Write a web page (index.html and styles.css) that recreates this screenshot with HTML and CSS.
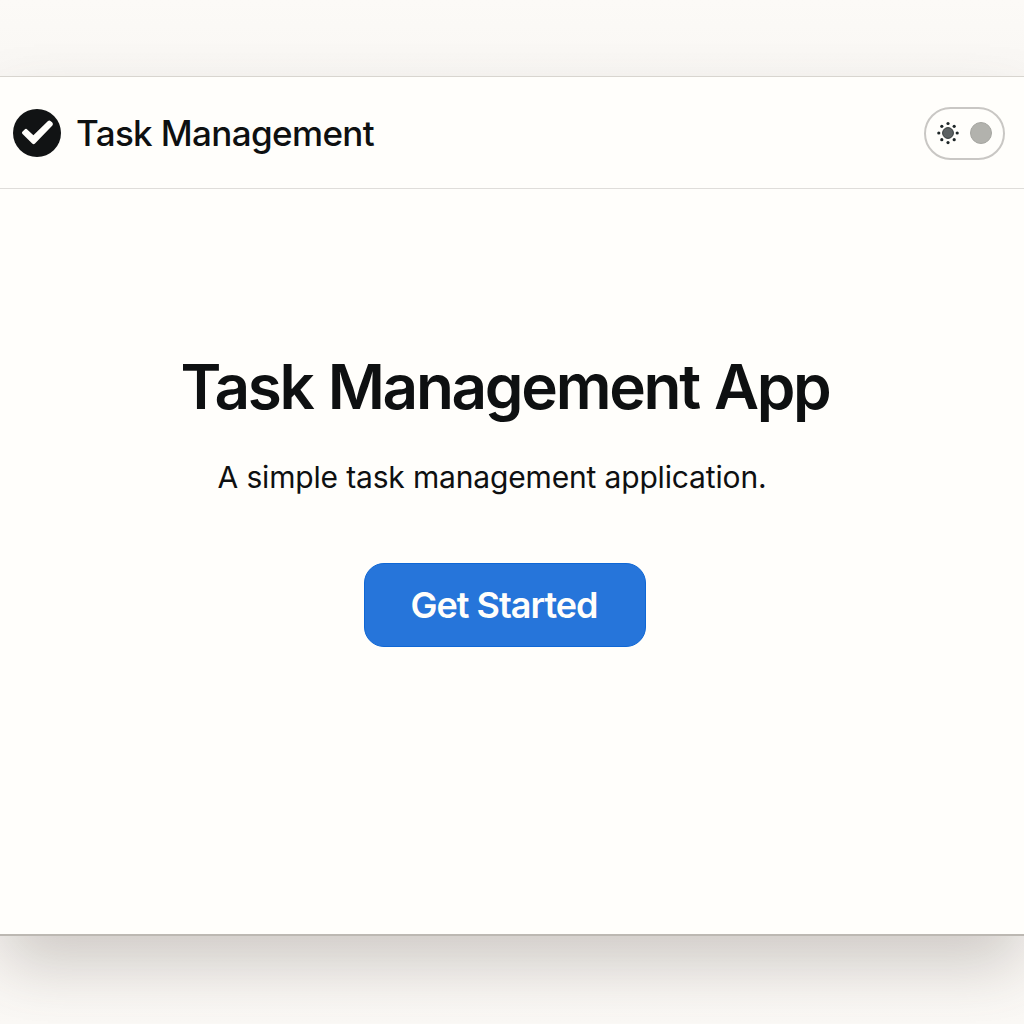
FILE: index.html
```html
<!DOCTYPE html>
<html lang="en">
<head>
<meta charset="utf-8">
<title>Task Management</title>
<link rel="stylesheet" href="styles.css">
</head>
<body>
<div class="window">
  <header class="header">
    <div class="brand">
      <svg class="logo" viewBox="0 0 48 48" aria-hidden="true">
        <circle cx="24" cy="24" r="24" fill="#111314"/>
        <path d="M9.6 22.4 12.2 20.1Q13.2 19.4 14.2 20.4L20.4 26.2 35 12.1Q36.3 11.1 37.8 12.2L39.3 13.5Q40.6 14.9 39.4 16.5L22 34.6Q20.6 35.9 19.2 34.5L9.3 24.7Q8.4 23.4 9.6 22.4Z" fill="#fffefb"/>
      </svg>
      <span class="brand-name">Task Management</span>
    </div>
    <button class="theme-toggle" aria-label="Toggle theme">
      <svg class="sun" viewBox="0 0 24 24" aria-hidden="true">
        <circle cx="12" cy="12" r="5.4" fill="#5d6263" stroke="#343a3b" stroke-width="1"/>
        <g fill="#1e2628">
          <circle cx="12" cy="2.5" r="1.6"/><circle cx="18.2" cy="5.3" r="1.6"/>
          <circle cx="21.2" cy="12" r="1.6"/><circle cx="18.2" cy="18.7" r="1.6"/>
          <circle cx="12" cy="21.6" r="1.6"/><circle cx="5.8" cy="18.7" r="1.6"/>
          <circle cx="2.8" cy="12" r="1.6"/><circle cx="5.8" cy="5.3" r="1.6"/>
        </g>
      </svg>
      <span class="knob"></span>
    </button>
  </header>
  <main class="hero">
    <h1 class="title">Task Management App</h1>
    <p class="subtitle">A simple task management application.</p>
    <button class="cta">Get Started</button>
  </main>
</div>
</body>
</html>
```
FILE: styles.css
```css
* { box-sizing: border-box; }
body {
  margin: 0;
  height: 1024px;
  padding-top: 76px;
  overflow: hidden;
  background: linear-gradient(#fcfaf7, #f9f7f4 76px, #f9f6f3 934px, #fbf9f6);
  font-family: Inter, "Liberation Sans", sans-serif;
  color: #0e1011;
}
.window {
  height: 860px;
  background: #fffefb;
  border-top: 1px solid #d8d5cf;
  border-bottom: 2px solid #bcb8b2;
  box-shadow: 0 32px 60px -4px rgba(78, 72, 62, .25);
}
.header {
  display: flex;
  align-items: center;
  justify-content: space-between;
  height: 112px;
  padding: 0 19px 0 13px;
  border-bottom: 1px solid #dfddda;
}
.brand { display: flex; align-items: center; gap: 15px; }
.logo { width: 48px; height: 48px; }
.brand-name { font-size: 35px; font-weight: 500; line-height: 48px; letter-spacing: -0.63px; white-space: nowrap; }
.theme-toggle {
  display: flex;
  align-items: center;
  gap: 10px;
  width: 81px;
  height: 53px;
  margin-top: 1px;
  padding: 0 0 1px 10px;
  border: 2px solid #c9c7c4;
  border-radius: 27px;
  background: #fffefb;
}
.sun { width: 24px; height: 24px; }
.knob { width: 22px; height: 22px; border: 1px solid #a6a6a1; border-radius: 50%; background: #b2b2ad; }
.hero { display: flex; flex-direction: column; align-items: center; padding-top: 160px; }
.title { margin: 0 14px 0 0; font-size: 62px; font-weight: 600; line-height: 76px; letter-spacing: -2.3px; word-spacing: 1.8px; white-space: nowrap; }
.subtitle { margin: 32px 40px 0 0; font-size: 30px; font-weight: 400; line-height: 40px; letter-spacing: -0.16px; white-space: nowrap; }
.cta {
  width: 282px;
  height: 84px;
  margin: 66px 14px 0 0;
  padding: 0 2px 0 0;
  border: 1px solid #0f67d5;
  border-radius: 20px;
  background: #2675da;
  color: #fffefb;
  font: 600 36px/80px Inter, "Liberation Sans", sans-serif;
  letter-spacing: -1px;
}
```
